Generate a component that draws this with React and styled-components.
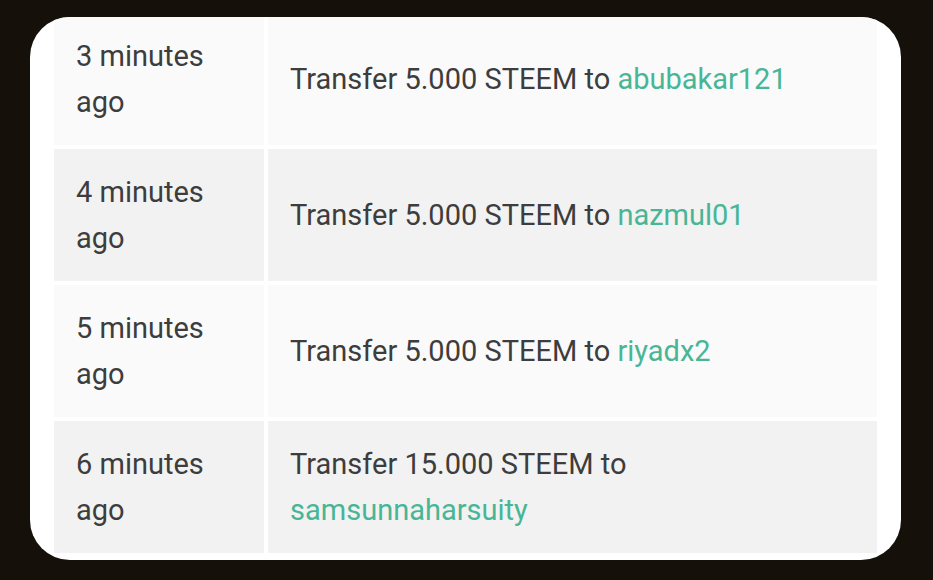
import React from "react";
import styled, { createGlobalStyle } from "styled-components";

const Global = createGlobalStyle`
  html, body { margin: 0; padding: 0; background: #15110a; }
  body { font-family: Roboto, "Noto Sans", "Liberation Sans", sans-serif; }
`;

const Page = styled.div`
  width: 933px;
  height: 580px;
  box-sizing: border-box;
  padding: 17px 32px 20px 30px;
  background: #15110a;
`;

const Card = styled.div`
  height: 100%;
  background: #ffffff;
  border-radius: 40px;
  overflow: hidden;
  padding: 0 24px 0 24px;
  box-sizing: border-box;
`;

const Table = styled.div`
  display: grid;
  grid-template-columns: 210px 1fr;
  column-gap: 4px;
  row-gap: 4px;
  margin-top: -4px;
`;

const Cell = styled.div`
  background: ${(p) => (p.$alt ? "#f2f2f2" : "#fafafa")};
  height: 132px;
  box-sizing: border-box;
  padding: 0 22px;
  display: flex;
  align-items: center;
  font-size: 29px;
  line-height: 46px;
  color: #3d3d3d;
`;

const Link = styled.span`
  color: #48b696;
`;

const rows = [
  { time: "3 minutes ago", amount: "5.000", to: "abubakar121" },
  { time: "4 minutes ago", amount: "5.000", to: "nazmul01" },
  { time: "5 minutes ago", amount: "5.000", to: "riyadx2" },
  { time: "6 minutes ago", amount: "15.000", to: "samsunnaharsuity" },
];

export default function App() {
  return (
    <>
      <Global />
      <Page>
        <Card>
          <Table>
            {rows.map((r, i) => (
              <React.Fragment key={i}>
                <Cell $alt={i % 2 === 1}>
                  <div>{r.time}</div>
                </Cell>
                <Cell $alt={i % 2 === 1}>
                  <div>
                    Transfer {r.amount} STEEM to <Link>{r.to}</Link>
                  </div>
                </Cell>
              </React.Fragment>
            ))}
          </Table>
        </Card>
      </Page>
    </>
  );
}
